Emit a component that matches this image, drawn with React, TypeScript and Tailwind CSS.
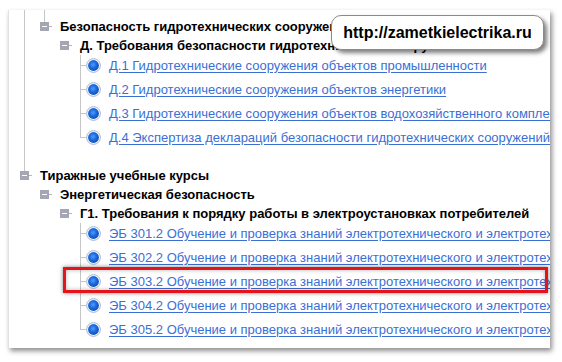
import React from "react";

const font = { fontFamily: '"Liberation Sans", Arial, sans-serif' };

const Line = () => (
  <div className="w-5 shrink-0 flex">
    <div className="ml-1 w-px bg-[#c6c6c6]" />
  </div>
);

const Empty = () => <div className="w-5 shrink-0" />;

const MinusBox = ({ lineTop = false }: { lineTop?: boolean }) => (
  <div className="w-5 shrink-0 flex flex-col">
    <div className={"flex-1 ml-1 " + (lineTop ? "border-l border-[#c6c6c6]" : "")} />
    <div className="flex items-center">
      <div className="w-[9px] h-[9px] bg-[#a4a7b3] flex items-center justify-center">
        <div className="w-[5px] h-px bg-white" />
      </div>
      <div className="w-[3px] h-px bg-[#b8b8b8]" />
    </div>
    <div className="flex-1" />
  </div>
);

const Radio = () => (
  <svg width="15" height="15" viewBox="0 0 15 15" className="shrink-0">
    <defs>
      <radialGradient id="rb" cx="0.45" cy="0.42" r="0.62">
        <stop offset="0" stopColor="#4f9cff" />
        <stop offset="0.5" stopColor="#1a6ce2" />
        <stop offset="1" stopColor="#0b4db5" />
      </radialGradient>
    </defs>
    <circle cx="7.5" cy="7.5" r="6.9" fill="#f4f7fb" stroke="#a7b6cc" strokeWidth="1" />
    <circle cx="7.5" cy="7.5" r="5.4" fill="url(#rb)" />
  </svg>
);

const Bold = ({ children }: { children: React.ReactNode }) => (
  <div className="h-[19px] flex items-center text-[13px] font-bold text-black whitespace-nowrap">
    {children}
  </div>
);

const LinkRow = ({ pre, text, last = false }: { pre: React.ReactNode; text: string; last?: boolean }) => (
  <div className="h-6 flex">
    {pre}
    <div className="w-[6px] shrink-0 flex flex-col">
      <div className="h-[10px] border-l border-[#c6c6c6]" />
      <div className="h-px bg-[#c6c6c6]" />
      <div className={"flex-1 " + (last ? "" : "border-l border-[#c6c6c6]")} />
    </div>
    <div className="h-[21px] flex items-center">
      <Radio />
      <a className="ml-2 text-[13px] text-[#3a6fd4] underline underline-offset-2 whitespace-nowrap">{text}</a>
    </div>
  </div>
);

export default function App() {
  const d = [
    "Д.1 Гидротехнические сооружения объектов промышленности",
    "Д.2 Гидротехнические сооружения объектов энергетики",
    "Д.3 Гидротехнические сооружения объектов водохозяйственного комплекса",
    "Д.4 Экспертиза деклараций безопасности гидротехнических сооружений",
  ];
  const eb = ["301.2", "302.2", "303.2", "304.2", "305.2"].map(
    (n) => `ЭБ ${n} Обучение и проверка знаний электротехнического и электротехнологического персонала`
  );
  return (
    <div className="relative w-[562px] h-[362px] bg-white overflow-hidden" style={font}>
      <div className="ml-2 mt-[10px] w-[542px] h-[338px] bg-white border-l border-[#e2e2e2] shadow-[2px_3px_5px_rgba(0,0,0,0.45)] overflow-hidden pl-[11px]">
        <div className="h-[26px] flex">
          <Line />
          <div className="flex flex-col">
            <div className="h-[7px] flex">
              <div className="ml-1 w-px bg-[#c6c6c6]" />
            </div>
            <div className="flex h-[19px]">
              <MinusBox lineTop />
              <Bold>Безопасность гидротехнических сооружений</Bold>
            </div>
          </div>
        </div>
        <div className="h-[19px] flex">
          <Line />
          <Empty />
          <MinusBox />
          <Bold>Д. Требования безопасности гидротехнических сооружений</Bold>
        </div>
        {d.map((t, i) => (
          <LinkRow
            key={t}
            pre={
              <>
                <Line />
                <Empty />
                <Empty />
              </>
            }
            text={t}
            last={i === d.length - 1}
          />
        ))}
        <div className="h-[15px] flex">
          <Line />
        </div>
        <div className="h-[19px] flex">
          <MinusBox lineTop />
          <Bold>Тиражные учебные курсы</Bold>
        </div>
        <div className="h-[19px] flex">
          <Empty />
          <MinusBox />
          <Bold>Энергетическая безопасность</Bold>
        </div>
        <div className="h-[19px] flex">
          <Empty />
          <Empty />
          <MinusBox />
          <Bold>Г1. Требования к порядку работы в электроустановках потребителей</Bold>
        </div>
        {eb.map((t, i) => (
          <LinkRow
            key={t}
            pre={
              <>
                <Empty />
                <Empty />
                <Empty />
              </>
            }
            text={t}
            last={i === eb.length - 1}
          />
        ))}
      </div>

      <div className="absolute left-[331px] top-[15px] w-[213px] h-[35px] rounded-[10px] border border-[#8a8a8a] bg-white shadow-[3px_3px_4px_rgba(0,0,0,0.5)] flex items-center justify-center">
        <span className="text-[16px] font-bold text-black">http://zametkielectrika.ru</span>
      </div>

      <div className="absolute left-[63px] top-[267px] w-[485px] h-[26px] border-[3px] border-[#e5141a] shadow-[0_0_4px_rgba(0,0,0,0.5),inset_0_0_4px_rgba(0,0,0,0.3)]" />
    </div>
  );
}
